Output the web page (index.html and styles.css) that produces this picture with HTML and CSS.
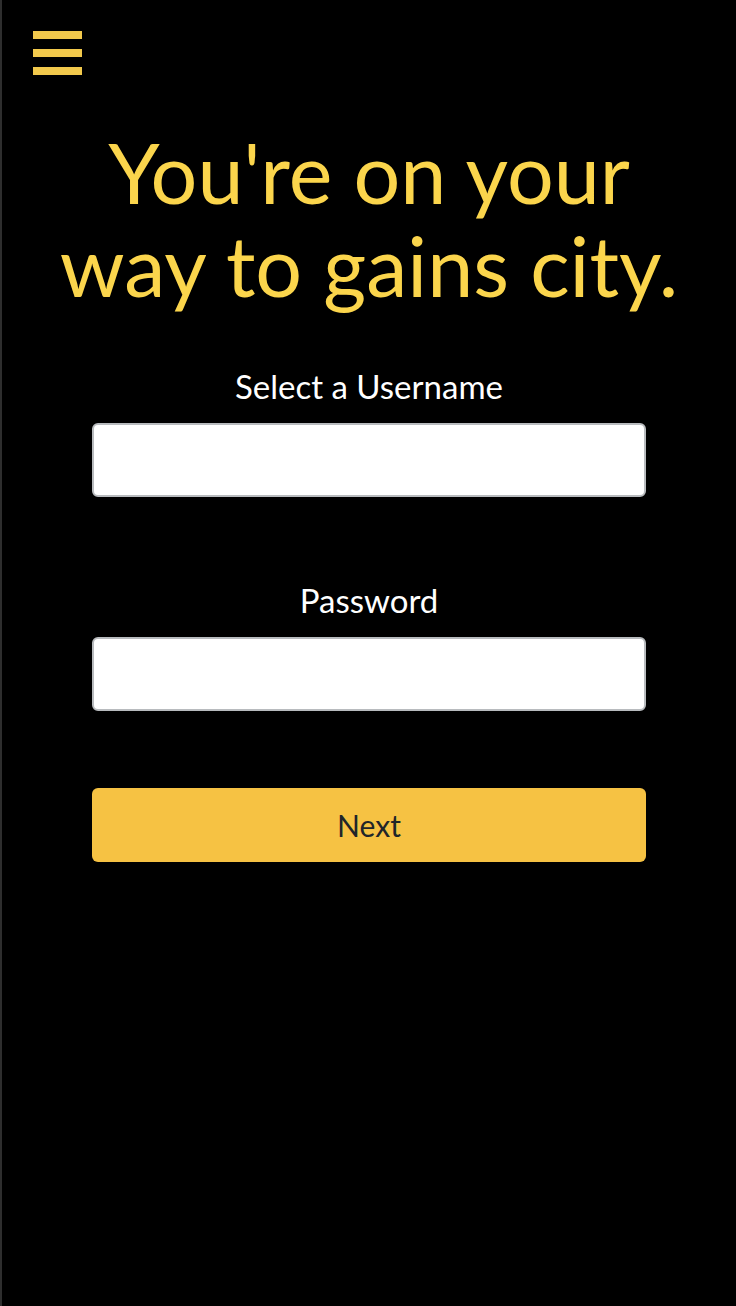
FILE: index.html
```html
<!DOCTYPE html>
<html lang="en">
<head>
<meta charset="utf-8">
<title>Sign up</title>
<link rel="stylesheet" href="styles.css">
</head>
<body>
<div class="page">
  <header class="topbar">
    <button class="menu" type="button" aria-label="Menu">
      <span class="bar"></span>
      <span class="bar"></span>
      <span class="bar"></span>
    </button>
  </header>
  <main class="content">
    <h1 class="title">You're on your<br>way to gains city.</h1>
    <form class="form">
      <label class="field">
        <span class="label">Select a Username</span>
        <input class="input" type="text">
      </label>
      <label class="field field-gap">
        <span class="label">Password</span>
        <input class="input" type="password">
      </label>
      <button class="next" type="button">Next</button>
    </form>
  </main>
</div>
</body>
</html>
```
FILE: styles.css
```css
html, body {
  margin: 0;
  padding: 0;
  background: #000;
}
body {
  font-family: Lato, "Liberation Sans", sans-serif;
}
.page {
  min-height: 1306px;
  border-left: 2px solid #2e2e2e;
  box-sizing: border-box;
  background: #000;
}
.topbar {
  padding: 31px 0 0 31px;
  height: 44px;
}
.menu {
  display: flex;
  flex-direction: column;
  gap: 10px;
  width: 49px;
  padding: 0;
  margin: 0;
  border: 0;
  background: transparent;
}
.bar {
  display: block;
  width: 49px;
  height: 8px;
  background: #f2c94c;
}
.content {
  display: flex;
  flex-direction: column;
  align-items: center;
}
.title {
  margin: 51px 0 0;
  font-size: 82.6px;
  line-height: 93px;
  font-weight: 400;
  color: #fbd54c;
  text-align: center;
}
.form {
  width: 554px;
  margin-top: 56px;
  display: flex;
  flex-direction: column;
}
.field {
  display: flex;
  flex-direction: column;
  align-items: center;
  gap: 19px;
}
.field-gap {
  margin-top: 85px;
}
.label {
  font-size: 33px;
  line-height: 36px;
  color: #fff;
}
.input {
  box-sizing: border-box;
  width: 554px;
  height: 74px;
  border: 2px solid #b8bbbe;
  border-radius: 6px;
  background: #fff;
  margin: 0;
  padding: 0 12px;
  font-size: 28px;
  font-family: inherit;
}
.next {
  margin-top: 77px;
  height: 74px;
  width: 554px;
  border: 0;
  border-radius: 6px;
  background: #f6c243;
  color: #212529;
  font-family: inherit;
  font-size: 30px;
  line-height: 36px;
  padding: 0;
}
```
